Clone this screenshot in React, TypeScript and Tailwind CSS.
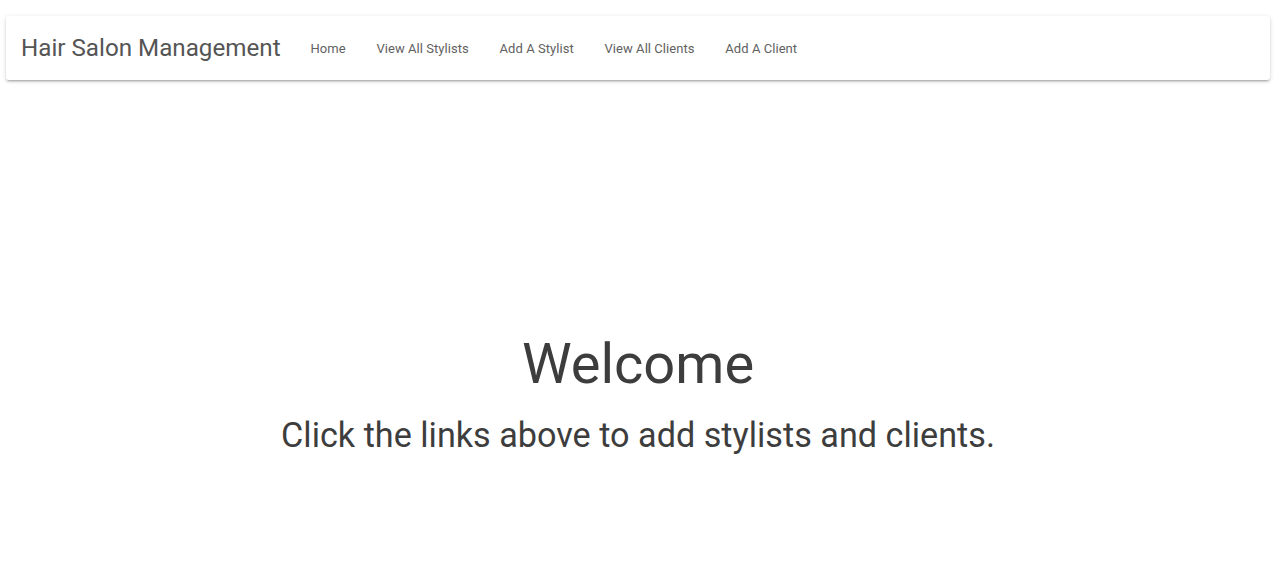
export default function App() {
  const links = ['Home', 'View All Stylists', 'Add A Stylist', 'View All Clients', 'Add A Client'];

  return (
    <div className="min-h-[587px] bg-white font-['Roboto',sans-serif]">
      {/* Navbar */}
      <div className="pl-[6px] pr-[10px] pt-[16px]">
        <nav className="flex h-[64px] items-center rounded-[3px] bg-white pl-[15px] shadow-[0_2px_2px_0_rgba(0,0,0,0.14),0_3px_1px_-2px_rgba(0,0,0,0.12),0_1px_5px_0_rgba(0,0,0,0.12)]">
          <span className="mr-[14.5px] text-[24.2px] text-[#555]">Hair Salon Management</span>
          {links.map((link) => (
            <a key={link} href="#" className="px-[15.4px] pt-[1px] text-[13px] tracking-[0.004em] text-[#616161]">
              {link}
            </a>
          ))}
        </nav>
      </div>

      {/* Welcome */}
      <div className="flex flex-col items-center pr-[4px] pt-[252px] text-[#3d3d3d]">
        <h1 className="text-[56px] leading-[64px]">Welcome</h1>
        <p className="mt-[19px] text-[34.2px] leading-[40px]">Click the links above to add stylists and clients.</p>
      </div>
    </div>
  );
}
